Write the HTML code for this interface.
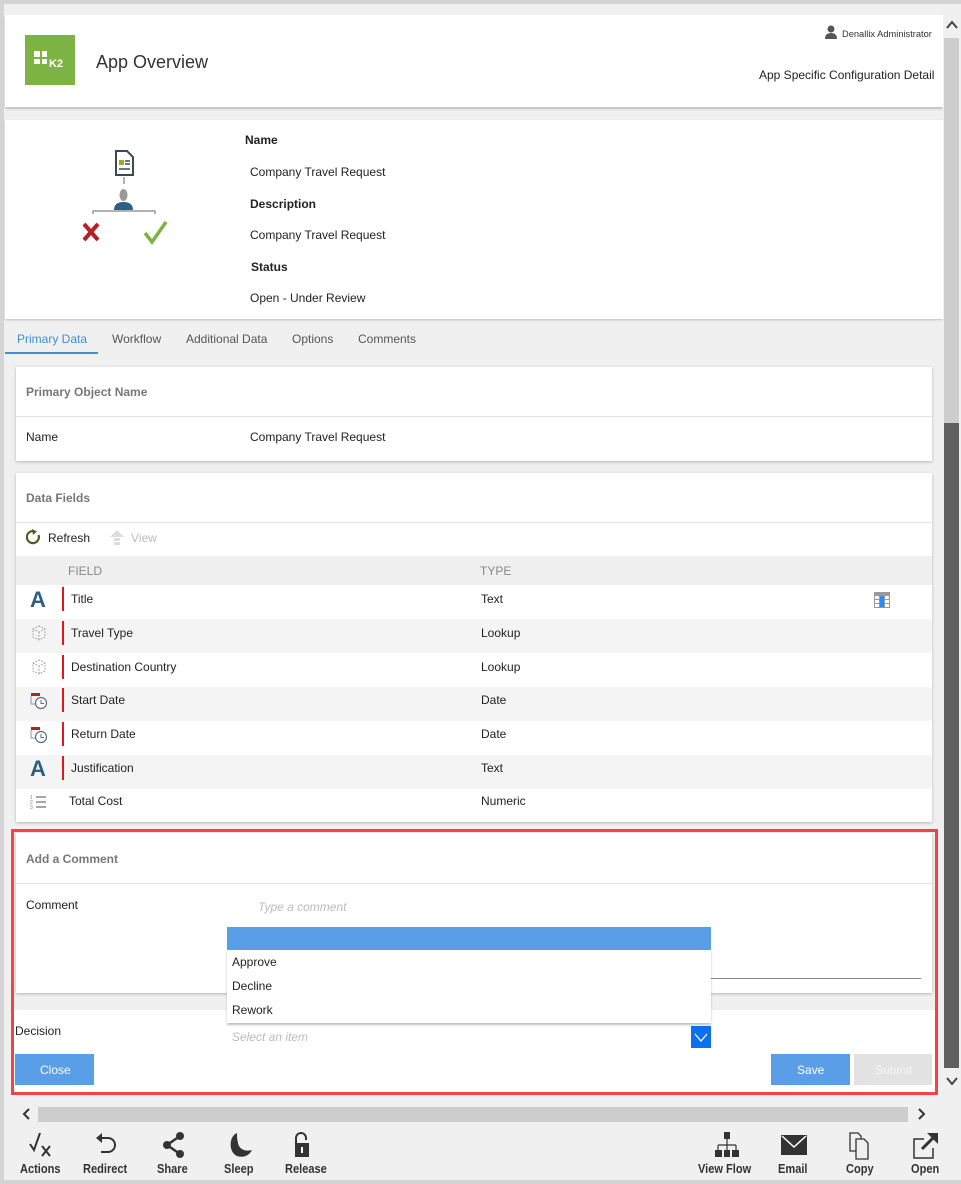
<!DOCTYPE html>
<html><head><meta charset="utf-8"><style>
*{margin:0;padding:0;box-sizing:border-box}
body{width:961px;height:1184px;overflow:hidden;background:#d4d4d4;font-family:"Liberation Sans",sans-serif;font-size:12px;color:#222;position:relative}
.a{position:absolute}
.t{position:absolute;white-space:nowrap;line-height:14px}
.card{position:absolute;background:#fff;box-shadow:0 1px 3px rgba(0,0,0,.25)}
.h{font-weight:bold;color:#777}
.b{font-weight:bold}
.row{position:absolute;left:16px;width:916px;height:34px}
.red{position:absolute;left:62px;width:2px;height:24px;background:#e2161e}
.lbl{position:absolute;font-family:"Liberation Sans Narrow","Liberation Sans",sans-serif;font-weight:bold;font-size:13px;color:#333;top:1161px;transform:scaleX(.85);transform-origin:left}
</style></head><body>
<div class="a" style="left:4px;top:4px;width:957px;height:1176px;background:#f0f0f0"></div>
<!-- header -->
<div class="a" style="left:5px;top:15px;width:938px;height:92px;background:#fff;box-shadow:0 2px 2px rgba(0,0,0,.2)"></div>
<div class="a" style="left:25px;top:35px;width:50px;height:50px;background:#7cb342"></div>
<div class="a" style="left:34px;top:51px;width:6px;height:6px;background:#fff"></div>
<div class="a" style="left:42px;top:51px;width:5px;height:6px;background:#fff"></div>
<div class="a" style="left:34px;top:59px;width:6px;height:5px;background:#fff"></div>
<div class="a" style="left:42px;top:59px;width:5px;height:5px;background:#fff"></div>
<div class="t" style="left:49px;top:57px;color:#fff;font-weight:bold;font-size:11px">K2</div>
<div class="t" style="left:96px;top:51px;font-size:18px;line-height:22px;color:#333">App Overview</div>
<svg class="a" style="left:825px;top:25px" width="12" height="14"><circle cx="6" cy="4" r="3.5" fill="#555"/><path d="M0 14 Q0 8 6 8 Q12 8 12 14Z" fill="#555"/></svg>
<div class="t" style="left:842px;top:27px;font-size:9.3px;color:#333">Denallix Administrator</div>
<div class="t" style="left:759px;top:68px;color:#222">App Specific Configuration Detail</div>
<!-- info -->
<div class="a" style="left:5px;top:120px;width:938px;height:199px;background:#fff;box-shadow:0 1px 2px rgba(0,0,0,.2)"></div>
<svg class="a" style="left:80px;top:148px" width="92" height="98">
<path d="M36 3h11l6 6v18H36z" fill="#fff" stroke="#3b4a52" stroke-width="2"/><rect x="39" y="12" width="5" height="5" fill="#a5a520"/><path d="M45 13h5M45 16h5M39 21h11" stroke="#3b4a52" stroke-width="1.5"/>
<path d="M44 29v7" stroke="#999" stroke-width="1.5"/>
<ellipse cx="43.5" cy="47" rx="4" ry="6" fill="#999"/><path d="M34 62q0-8 9.5-8q9.5 0 9.5 8z" fill="#2e5f80"/>
<path d="M13 66v-3h62v3M44 62v1" stroke="#999" stroke-width="1.5" fill="none"/>
<path d="M4 76l14 16M18 76L4 92" stroke="#b81d2a" stroke-width="4"/>
<path d="M65 85l7 9l14-20" stroke="#7cb342" stroke-width="3.5" fill="none"/>
</svg>
<div class="t b" style="left:245px;top:133px">Name</div>
<div class="t" style="left:250px;top:165px">Company Travel Request</div>
<div class="t b" style="left:250px;top:197px">Description</div>
<div class="t" style="left:250px;top:228px">Company Travel Request</div>
<div class="t b" style="left:251px;top:260px">Status</div>
<div class="t" style="left:250px;top:291px">Open - Under Review</div>
<!-- tabs -->
<div class="t" style="left:17px;top:332px;color:#3d8fd8">Primary Data</div>
<div class="a" style="left:5px;top:352px;width:93px;height:2px;background:#3d8fd8"></div>
<div class="t" style="left:112px;top:332px;color:#555">Workflow</div>
<div class="t" style="left:186px;top:332px;color:#555">Additional Data</div>
<div class="t" style="left:292px;top:332px;color:#555">Options</div>
<div class="t" style="left:358px;top:332px;color:#555">Comments</div>
<!-- card1 -->
<div class="card" style="left:16px;top:367px;width:916px;height:94px"></div>
<div class="t h" style="left:26px;top:385px">Primary Object Name</div>
<div class="a" style="left:16px;top:416px;width:916px;height:1px;background:#e2e2e2"></div>
<div class="t" style="left:26px;top:430px">Name</div>
<div class="t" style="left:250px;top:430px">Company Travel Request</div>
<!-- card2 -->
<div class="card" style="left:16px;top:473px;width:916px;height:349px"></div>
<div class="t h" style="left:26px;top:491px">Data Fields</div>
<div class="a" style="left:16px;top:522px;width:916px;height:1px;background:#e2e2e2"></div>
<svg class="a" style="left:26px;top:529px" width="16" height="16"><path d="M12.5 6A6 6 0 1 1 8 2.2" stroke="#4a5e1e" stroke-width="2.2" fill="none"/><path d="M6 0l5 2.5l-4 3.5z" fill="#4a5e1e"/></svg>
<div class="t" style="left:48px;top:531px">Refresh</div>
<svg class="a" style="left:110px;top:530px" width="14" height="16"><path d="M7 0l7 7H0z" fill="#ddd"/><rect x="4" y="8" width="6" height="3" fill="#ddd"/><rect x="4" y="12" width="6" height="3" fill="#ddd"/></svg>
<div class="t" style="left:131px;top:531px;color:#bbb">View</div>
<div class="a" style="left:16px;top:556px;width:916px;height:29px;background:#efefef"></div>
<div class="t" style="left:68px;top:564px;color:#888">FIELD</div>
<div class="t" style="left:480px;top:564px;color:#888">TYPE</div>
<div class="row" style="top:585px;background:#fff"></div>
<div class="row" style="top:619px;background:#f4f4f4"></div>
<div class="row" style="top:653px;background:#fff"></div>
<div class="row" style="top:687px;background:#f4f4f4"></div>
<div class="row" style="top:721px;background:#fff"></div>
<div class="row" style="top:755px;background:#f4f4f4"></div>
<div class="row" style="top:789px;height:33px;background:#fff"></div>
<div class="red" style="top:587px"></div><div class="red" style="top:621px"></div><div class="red" style="top:655px"></div><div class="red" style="top:688px"></div><div class="red" style="top:722px"></div><div class="red" style="top:756px"></div>
<div class="t" style="left:30px;top:589px;font-size:22px;line-height:22px;font-weight:bold;color:#2e5f80">A</div>
<div class="t" style="left:30px;top:758px;font-size:22px;line-height:22px;font-weight:bold;color:#2e5f80">A</div>
<svg class="a" style="left:31px;top:625px" width="16" height="16"><path d="M8 1l6 3v8l-6 3l-6-3V4zM2 4l6 3l6-3M8 7v8" stroke="#999" fill="none" stroke-dasharray="1.5 1.5"/></svg>
<svg class="a" style="left:31px;top:659px" width="16" height="16"><path d="M8 1l6 3v8l-6 3l-6-3V4zM2 4l6 3l6-3M8 7v8" stroke="#999" fill="none" stroke-dasharray="1.5 1.5"/></svg>
<svg class="a" style="left:30px;top:692px" width="18" height="18"><rect x="1" y="1" width="9" height="3" fill="#b81d2a"/><path d="M1 4v8h5" stroke="#8a98a8" fill="none"/><circle cx="11" cy="11" r="5.5" stroke="#5d6e80" stroke-width="1.2" fill="#fff"/><path d="M11 8v3.5h3" stroke="#5d6e80" fill="none"/></svg>
<svg class="a" style="left:30px;top:726px" width="18" height="18"><rect x="1" y="1" width="9" height="3" fill="#b81d2a"/><path d="M1 4v8h5" stroke="#8a98a8" fill="none"/><circle cx="11" cy="11" r="5.5" stroke="#5d6e80" stroke-width="1.2" fill="#fff"/><path d="M11 8v3.5h3" stroke="#5d6e80" fill="none"/></svg>
<svg class="a" style="left:30px;top:794px" width="18" height="16"><path d="M6 3h10M6 8h10M6 13h10" stroke="#888" stroke-width="1.6"/><text x="0" y="5" font-size="5" fill="#888">1</text><text x="0" y="10" font-size="5" fill="#888">2</text><text x="0" y="15" font-size="5" fill="#888">3</text></svg>
<svg class="a" style="left:874px;top:592px" width="16" height="16"><rect x="0" y="0" width="16" height="16" fill="#999"/><g fill="#fff"><rect x="1" y="4" width="4" height="3"/><rect x="11" y="4" width="4" height="3"/><rect x="1" y="8" width="4" height="3"/><rect x="11" y="8" width="4" height="3"/><rect x="1" y="12" width="4" height="3"/><rect x="11" y="12" width="4" height="3"/></g><rect x="6" y="4" width="4" height="11" fill="#1e90ff"/></svg>
<div class="t" style="left:71px;top:592px">Title</div><div class="t" style="left:481px;top:592px">Text</div>
<div class="t" style="left:71px;top:626px">Travel Type</div><div class="t" style="left:481px;top:626px">Lookup</div>
<div class="t" style="left:71px;top:660px">Destination Country</div><div class="t" style="left:481px;top:660px">Lookup</div>
<div class="t" style="left:71px;top:693px">Start Date</div><div class="t" style="left:481px;top:693px">Date</div>
<div class="t" style="left:71px;top:727px">Return Date</div><div class="t" style="left:481px;top:727px">Date</div>
<div class="t" style="left:71px;top:761px">Justification</div><div class="t" style="left:481px;top:761px">Text</div>
<div class="t" style="left:69px;top:794px">Total Cost</div><div class="t" style="left:481px;top:794px">Numeric</div>
<!-- comment area -->
<div class="card" style="left:16px;top:833px;width:916px;height:160px"></div>
<div class="t h" style="left:26px;top:852px">Add a Comment</div>
<div class="a" style="left:16px;top:883px;width:916px;height:1px;background:#e2e2e2"></div>
<div class="t" style="left:26px;top:898px">Comment</div>
<div class="t" style="left:258px;top:900px;color:#bbb;font-style:italic">Type a comment</div>
<div class="a" style="left:228px;top:978px;width:693px;height:1px;background:#888"></div>
<div class="a" style="left:14px;top:1010px;width:922px;height:82px;background:#fff"></div>
<div class="t" style="left:15px;top:1024px">Decision</div>
<div class="t" style="left:232px;top:1030px;color:#bbb;font-style:italic">Select an item</div>
<div class="a" style="left:691px;top:1026px;width:20px;height:22px;background:#0a6ff0"></div>
<svg class="a" style="left:691px;top:1026px" width="20" height="22"><path d="M4 8l6 7l6-7" stroke="#fff" stroke-width="1.3" fill="none"/></svg>
<div class="a" style="left:227px;top:950px;width:484px;height:73px;background:#fff;box-shadow:0 2px 2px rgba(0,0,0,.25)"></div>
<div class="a" style="left:227px;top:927px;width:484px;height:23px;background:#5b9ee8"></div>
<div class="t" style="left:232px;top:955px">Approve</div>
<div class="t" style="left:232px;top:979px">Decline</div>
<div class="t" style="left:232px;top:1003px">Rework</div>
<div class="a" style="left:15px;top:1054px;width:79px;height:31px;background:#5b9ee8"></div>
<div class="t" style="left:40px;top:1063px;color:#fff">Close</div>
<div class="a" style="left:771px;top:1054px;width:79px;height:31px;background:#5b9ee8"></div>
<div class="t" style="left:797px;top:1063px;color:#fff">Save</div>
<div class="a" style="left:854px;top:1054px;width:78px;height:31px;background:#e2e2e2"></div>
<div class="t" style="left:875px;top:1063px;color:#f6f6f6">Submit</div>
<div class="a" style="left:11px;top:829px;width:927px;height:266px;border:3px solid #f44248"></div>
<!-- vertical scrollbar -->
<div class="a" style="left:943px;top:15px;width:18px;height:1083px;background:#f0f0f0"></div>
<div class="a" style="left:944px;top:38px;width:15px;height:385px;background:#cdcdcd"></div>
<div class="a" style="left:944px;top:423px;width:15px;height:645px;background:#606060"></div>
<svg class="a" style="left:946px;top:20px" width="12" height="10"><path d="M1 8l5-6l5 6" stroke="#444" stroke-width="2" fill="none"/></svg>
<svg class="a" style="left:946px;top:1076px" width="12" height="10"><path d="M1 2l5 6l5-6" stroke="#444" stroke-width="2" fill="none"/></svg>
<!-- bottom -->
<div class="a" style="left:4px;top:1098px;width:957px;height:82px;background:#f0f0f0"></div>
<svg class="a" style="left:22px;top:1108px" width="10" height="12"><path d="M7 1L2 6l5 5" stroke="#333" stroke-width="2" fill="none"/></svg>
<div class="a" style="left:38px;top:1107px;width:870px;height:15px;background:#cdcdcd"></div>
<svg class="a" style="left:916px;top:1108px" width="10" height="12"><path d="M3 1l5 5l-5 5" stroke="#333" stroke-width="2" fill="none"/></svg>
<svg class="a" style="left:28px;top:1132px" width="28" height="26"><path d="M2 12l4 6l6-17" stroke="#333" stroke-width="2" fill="none"/><path d="M14 14l8 10M22 14l-8 10" stroke="#333" stroke-width="2"/></svg>
<svg class="a" style="left:95px;top:1132px" width="26" height="26"><path d="M6 6h7a7 7 0 0 1 0 14H6" stroke="#333" stroke-width="2" fill="none"/><path d="M1 6l6-5v10z" fill="#333"/></svg>
<svg class="a" style="left:162px;top:1132px" width="26" height="26"><circle cx="18" cy="4" r="4" fill="#333"/><circle cx="5" cy="13" r="4" fill="#333"/><circle cx="18" cy="22" r="4" fill="#333"/><path d="M18 4L5 13l13 9" stroke="#333" stroke-width="2.5" fill="none"/></svg>
<svg class="a" style="left:227px;top:1132px" width="26" height="26"><path d="M10 1C2 4 1 20 10 24C16 26 22 24 25 18C18 20 12 17 11 11C10 7 10 4 10 1Z" fill="#333"/></svg>
<svg class="a" style="left:292px;top:1131px" width="20" height="28"><path d="M4 12V7a5 5 0 0 1 10 0v2" stroke="#333" stroke-width="2" fill="none"/><rect x="3" y="12" width="14" height="14" fill="#333"/><rect x="9" y="16" width="2" height="6" fill="#fff"/></svg>
<svg class="a" style="left:714px;top:1132px" width="26" height="26"><rect x="10" y="0" width="6" height="7" fill="#333"/><path d="M13 7v6M4 13h18M4 13v5M13 13v5M22 13v5" stroke="#333" stroke-width="1.2" fill="none"/><rect x="1" y="18" width="7" height="7" fill="#333"/><rect x="10" y="18" width="6" height="7" fill="#333"/><rect x="18" y="18" width="7" height="7" fill="#333"/></svg>
<svg class="a" style="left:781px;top:1135px" width="26" height="20"><rect x="0" y="0" width="26" height="20" fill="#333"/><path d="M1 1l12 11l12-11" stroke="#fff" stroke-width="1.5" fill="none"/></svg>
<svg class="a" style="left:848px;top:1132px" width="26" height="28"><path d="M2 1h8l3 3v15H2z" stroke="#333" stroke-width="1.3" fill="#f0f0f0"/><path d="M8 7h8l4 4v16H8z" stroke="#333" stroke-width="1.3" fill="#f0f0f0"/></svg>
<svg class="a" style="left:912px;top:1132px" width="28" height="28"><path d="M12 7H2v19h19V16" stroke="#333" stroke-width="1.5" fill="none"/><path d="M10 17L22 5" stroke="#333" stroke-width="3"/><path d="M15 1h11v11z" fill="#333"/></svg>
<div class="lbl" style="left:20px">Actions</div>
<div class="lbl" style="left:83px">Redirect</div>
<div class="lbl" style="left:157px">Share</div>
<div class="lbl" style="left:224px">Sleep</div>
<div class="lbl" style="left:285px">Release</div>
<div class="lbl" style="left:698px">View Flow</div>
<div class="lbl" style="left:778px">Email</div>
<div class="lbl" style="left:846px">Copy</div>
<div class="lbl" style="left:911px">Open</div>
</body></html>
